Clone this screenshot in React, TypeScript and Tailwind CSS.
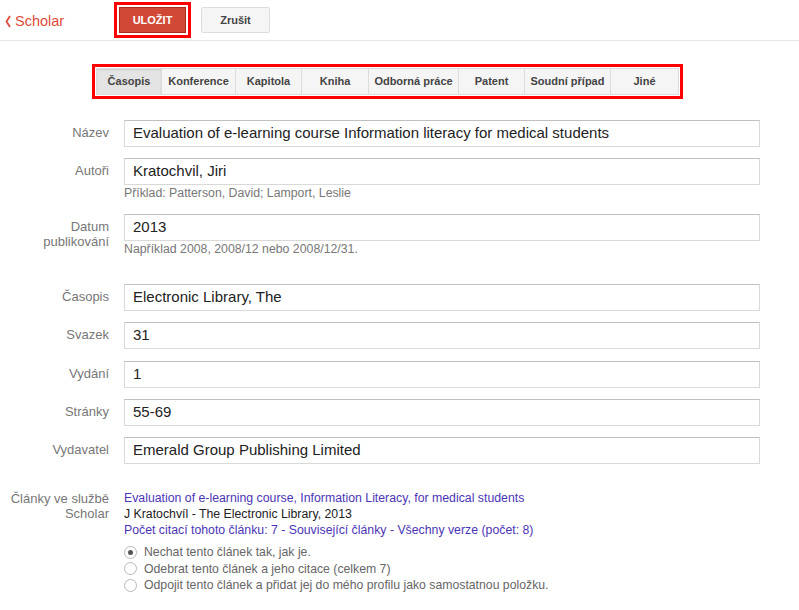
const tabs = [
  { label: "Časopis", w: "w-[66px]", active: true },
  { label: "Konference", w: "w-[74px]" },
  { label: "Kapitola", w: "w-[66px]" },
  { label: "Kniha", w: "w-[67px]" },
  { label: "Odborná práce", w: "w-[90px]" },
  { label: "Patent", w: "w-[66px]" },
  { label: "Soudní případ", w: "w-[86px]" },
  { label: "Jiné", w: "w-[68px]" },
];

// Field row: right-aligned label + text input
const Field = ({
  label,
  value,
  hint,
  className = "",
}: {
  label: React.ReactNode;
  value: string;
  hint?: string;
  className?: string;
}) => (
  <div className={`flex ${className}`}>
    <div className="w-[109px] shrink-0 pt-[5px] text-right text-[13px] leading-[15px] text-[#777]">
      {label}
    </div>
    <div className="ml-[15px] w-[636px]">
      <div className="flex h-[27px] items-center border border-[#d9d9d9] border-t-[#c0c0c0] bg-white px-[8px] text-[15px] text-[#222]">
        {value}
      </div>
      {hint && (
        <div className="h-[16px] text-[12.3px] leading-[16px] text-[#777]">{hint}</div>
      )}
    </div>
  </div>
);

const Radio = ({ checked, children }: { checked?: boolean; children: React.ReactNode }) => (
  <label className="flex h-[16.5px] items-center">
    <span className="flex h-[13px] w-[13px] items-center justify-center rounded-full border border-[#b8b8b8] bg-white">
      {checked && <span className="h-[5px] w-[5px] rounded-full bg-[#555]" />}
    </span>
    <span className="ml-[7px] text-[12.25px] text-[#666]">{children}</span>
  </label>
);

export default function App() {
  return (
    <div className="min-h-[610px] w-[799px] bg-white font-['Liberation_Sans',Arial,sans-serif]">
      {/* Header */}
      <div className="flex h-[41px] items-start border-b border-[#e5e5e5] pl-[5px]">
        <div className="mt-[13px] flex w-[114px] items-center text-[#dd4b39]">
          <svg width="6" height="13" viewBox="0 0 6 13" className="mr-[4px]">
            <path d="M5 1 L1.5 6.5 L5 12" fill="none" stroke="#dd4b39" strokeWidth="1.8" />
          </svg>
          <span className="text-[14.5px] leading-[16px]">Scholar</span>
        </div>
        <button className="mt-[7px] h-[26px] w-[67px] border border-[#b0281a] bg-[#d14836] text-[11px] font-bold text-white outline-[3px] outline-offset-[2px] outline-[#ff0000] outline-solid">
          ULOŽIT
        </button>
        <button className="ml-[15px] mt-[7px] h-[26px] w-[69px] rounded-[2px] border border-[#dcdcdc] bg-[#f5f5f5] text-[11px] font-bold text-[#444]">
          Zrušit
        </button>
      </div>

      {/* Type tabs */}
      <div className="ml-[96px] mt-[27px] flex w-fit outline-[3px] outline-offset-[1px] outline-[#ff0000] outline-solid">
        {tabs.map((t) => (
          <div
            key={t.label}
            className={`${t.w} flex h-[27px] items-center justify-center border border-l-0 first:border-l border-[#dcdcdc] text-[11px] font-bold text-[#444] ${
              t.active ? "bg-[#e4e4e4] shadow-[inset_0_1px_2px_rgba(0,0,0,0.1)]" : "bg-[#f5f5f5]"
            }`}
          >
            {t.label}
          </div>
        ))}
      </div>

      {/* Form */}
      <div className="mt-[25px] flex flex-col">
        <Field
          label="Název"
          value="Evaluation of e-learning course Information literacy for medical students"
        />
        <Field
          className="mt-[11px]"
          label="Autoři"
          value="Kratochvil, Jiri"
          hint="Příklad: Patterson, David; Lamport, Leslie"
        />
        <Field
          className="mt-[13px]"
          label={
            <>
              Datum
              <br />
              publikování
            </>
          }
          value="2013"
          hint="Například 2008, 2008/12 nebo 2008/12/31."
        />
        <Field className="mt-[27px]" label="Časopis" value="Electronic Library, The" />
        <Field className="mt-[11px]" label="Svazek" value="31" />
        <Field className="mt-[12px]" label="Vydání" value="1" />
        <Field className="mt-[11px]" label="Stránky" value="55-69" />
        <Field className="mt-[11px]" label="Vydavatel" value="Emerald Group Publishing Limited" />

        {/* Scholar articles */}
        <div className="mt-[26px] flex">
          <div className="w-[109px] shrink-0 pt-[1px] text-right text-[13px] leading-[15px] text-[#777]">
            Články ve službě
            <br />
            Scholar
          </div>
          <div className="ml-[15px]">
            <div className="text-[12.3px] leading-[16px]">
              <a className="text-[#4b35b5]">
                Evaluation of e-learning course, Information Literacy, for medical students
              </a>
              <div className="text-[#222]">J Kratochvíl - The Electronic Library, 2013</div>
              <div className="text-[#4b35b5]">
                Počet citací tohoto článku: 7 - Související články - Všechny verze (počet: 8)
              </div>
            </div>
            <div className="mt-[6px] flex flex-col">
              <Radio checked>Nechat tento článek tak, jak je.</Radio>
              <Radio>Odebrat tento článek a jeho citace (celkem 7)</Radio>
              <Radio>Odpojit tento článek a přidat jej do mého profilu jako samostatnou položku.</Radio>
            </div>
          </div>
        </div>
      </div>
    </div>
  );
}
